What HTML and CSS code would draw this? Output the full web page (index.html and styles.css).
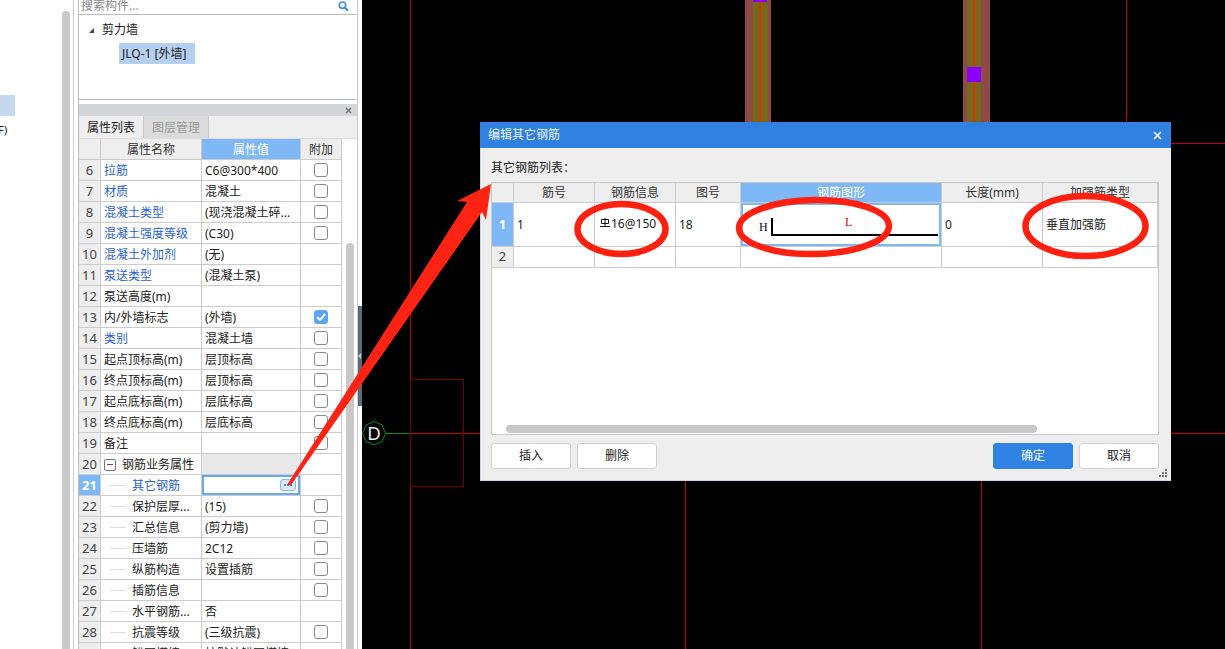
FILE: index.html
```html
<!DOCTYPE html>
<html lang="zh">
<head>
<meta charset="utf-8">
<title>编辑其它钢筋</title>
<link rel="stylesheet" href="styles.css">
</head>
<body>
<div class="app">
  <aside class="nav">
    <div class="nav-item"></div>
    <div class="nav-label">F)</div>
  </aside>
  <div class="gutter"><div class="gutter-thumb"></div></div>
  <section class="panel">
    <div class="search">
      <span class="search-text">搜索构件...</span>
      <svg class="search-icon" width="11" height="11" viewBox="0 0 11 11"><circle cx="4.5" cy="4.2" r="3.2" fill="none" stroke="#3d8fd8" stroke-width="1.6"/><path d="M7 6.8l3 3" stroke="#3d8fd8" stroke-width="2"/></svg>
    </div>
    <div class="tree">
      <div class="tree-root"><span class="tree-arrow"></span>剪力墙</div>
      <div class="tree-leaf">JLQ-1 [外墙]</div>
    </div>
    <div class="panel-bar"><svg width="7" height="7" viewBox="0 0 7 7"><path d="M1 1l5 5M6 1l-5 5" stroke="#777" stroke-width="1.5"/></svg></div>
    <div class="tabs">
      <div class="tab tab-on">属性列表</div>
      <div class="tab tab-off">图层管理</div>
    </div>
    <div class="props">
      <table class="ptable">
        <colgroup><col class="c-num"><col class="c-name"><col class="c-val"><col class="c-add"></colgroup>
        <thead><tr><th></th><th>属性名称</th><th class="th-on">属性值</th><th>附加</th></tr></thead>
        <tbody>
          <tr><td class="num">6</td><td class="link">拉筋</td><td>C6@300*400</td><td class="add"><i class="cb"></i></td></tr>
          <tr><td class="num">7</td><td class="link">材质</td><td>混凝土</td><td class="add"><i class="cb"></i></td></tr>
          <tr><td class="num">8</td><td class="link">混凝土类型</td><td>(现浇混凝土碎...</td><td class="add"><i class="cb"></i></td></tr>
          <tr><td class="num">9</td><td class="link">混凝土强度等级</td><td>(C30)</td><td class="add"><i class="cb"></i></td></tr>
          <tr><td class="num">10</td><td class="link">混凝土外加剂</td><td>(无)</td><td class="add"></td></tr>
          <tr><td class="num">11</td><td class="link">泵送类型</td><td>(混凝土泵)</td><td class="add"></td></tr>
          <tr><td class="num">12</td><td>泵送高度(m)</td><td></td><td class="add"></td></tr>
          <tr><td class="num">13</td><td>内/外墙标志</td><td>(外墙)</td><td class="add"><i class="cb cb-on"><svg width="10" height="8" viewBox="0 0 10 8"><path d="M1 4l3 3 5-6" fill="none" stroke="#fff" stroke-width="2"/></svg></i></td></tr>
          <tr><td class="num">14</td><td class="link">类别</td><td>混凝土墙</td><td class="add"><i class="cb"></i></td></tr>
          <tr><td class="num">15</td><td>起点顶标高(m)</td><td>层顶标高</td><td class="add"><i class="cb"></i></td></tr>
          <tr><td class="num">16</td><td>终点顶标高(m)</td><td>层顶标高</td><td class="add"><i class="cb"></i></td></tr>
          <tr><td class="num">17</td><td>起点底标高(m)</td><td>层底标高</td><td class="add"><i class="cb"></i></td></tr>
          <tr><td class="num">18</td><td>终点底标高(m)</td><td>层底标高</td><td class="add"><i class="cb"></i></td></tr>
          <tr><td class="num">19</td><td>备注</td><td></td><td class="add"><i class="cb"></i></td></tr>
          <tr><td class="num">20</td><td class="group"><span class="minus"></span>钢筋业务属性</td><td class="group-val"></td><td class="add"></td></tr>
          <tr><td class="num num-on">21</td><td class="sub link"><span class="dash"></span>其它钢筋</td><td class="val-on"><span class="more"><svg width="8" height="2" viewBox="0 0 8 2"><path d="M0 0h2v2H0zM3 0h2v2H3zM6 0h2v2H6z" fill="#5a8fd0"/></svg></span></td><td class="add"></td></tr>
          <tr><td class="num">22</td><td class="sub"><span class="dash"></span>保护层厚...</td><td>(15)</td><td class="add"><i class="cb"></i></td></tr>
          <tr><td class="num">23</td><td class="sub"><span class="dash"></span>汇总信息</td><td>(剪力墙)</td><td class="add"><i class="cb"></i></td></tr>
          <tr><td class="num">24</td><td class="sub"><span class="dash"></span>压墙筋</td><td>2C12</td><td class="add"><i class="cb"></i></td></tr>
          <tr><td class="num">25</td><td class="sub"><span class="dash"></span>纵筋构造</td><td>设置插筋</td><td class="add"><i class="cb"></i></td></tr>
          <tr><td class="num">26</td><td class="sub"><span class="dash"></span>插筋信息</td><td></td><td class="add"><i class="cb"></i></td></tr>
          <tr><td class="num">27</td><td class="sub"><span class="dash"></span>水平钢筋...</td><td>否</td><td class="add"></td></tr>
          <tr><td class="num">28</td><td class="sub"><span class="dash"></span>抗震等级</td><td>(三级抗震)</td><td class="add"><i class="cb"></i></td></tr>
          <tr><td class="num">29</td><td class="sub"><span class="dash"></span>锚固搭接</td><td>按默认锚固搭接</td><td class="add"></td></tr>
        </tbody>
      </table>
      <div class="props-scroll"><div class="props-thumb"></div></div>
    </div>
  </section>
  <div class="splitter"><div class="splitter-grip"><span class="splitter-arrow"></span></div></div>
  <main class="canvas">
    <svg class="drawing" width="863" height="649" viewBox="362 0 863 649">
      <path d="M410.5 0V649M1126.5 0V144M685.5 470V649M981.5 470V649" stroke="#c00000" stroke-width="1" fill="none"/>
      <path d="M1126 143.500H1225M410 433.500H500M1160 433.500H1225" stroke="#c00000" fill="none"/>
      <rect x="410.500" y="379.500" width="53" height="107" fill="none" stroke="#740000"/>
      <path d="M385 433.500H410" stroke="#0c8c0c" fill="none"/>
      <path d="M374 421.500l8 3.500 3.500 8.500-3.500 8-8 3.500-8-3.500-3.500-8 3.500-8.500z" fill="none" stroke="#0c8c0c"/>
      <text class="axis-label" x="374" y="439.500">D</text>
      <rect x="745" y="0" width="26" height="125" fill="#8f4a46"/>
      <rect x="753" y="0" width="15" height="125" fill="#75691c"/>
      <rect x="759.500" y="0" width="1.500" height="125" fill="#ff2000"/>
      <rect x="753" y="0" width="14" height="2" fill="#8a00ff"/>
      <rect x="963" y="0" width="27" height="125" fill="#8f4a46"/>
      <rect x="967" y="0" width="14" height="125" fill="#75691c"/>
      <rect x="973.500" y="0" width="1.500" height="125" fill="#ff2000"/>
      <rect x="967" y="67" width="14" height="15" fill="#8a00ff"/>
    </svg>
  </main>
</div>

<div class="dialog">
  <header class="dialog-title">
    <span>编辑其它钢筋</span>
    <svg width="9" height="9" viewBox="0 0 9 9"><path d="M1 1l7 7M8 1l-7 7" stroke="#fff" stroke-width="1.600"/></svg>
  </header>
  <div class="dialog-body">
    <div class="dialog-label">其它钢筋列表<span class="colon">：</span></div>
    <div class="grid-wrap">
      <table class="dtable">
        <colgroup><col class="d-num"><col class="d-a"><col class="d-a"><col class="d-b"><col class="d-c"><col class="d-d"><col class="d-e"></colgroup>
        <thead><tr><th></th><th>筋号</th><th>钢筋信息</th><th>图号</th><th class="th-on">钢筋图形</th><th>长度(mm)</th><th>加强筋类型</th></tr></thead>
        <tbody>
          <tr class="row-tall"><td class="num num-on">1</td><td>1</td><td class="info-cell"><svg class="rebar" width="10" height="10" viewBox="0 0 10 10"><path d="M1.500 1.500h7v4h-7zM5 0v8M0 8.500h10" fill="none" stroke="#111" stroke-width="1"/></svg>16@150</td><td>18</td>
            <td class="shape-cell">
              <div class="shape">
                <span class="shape-h">H</span>
                <span class="shape-l">L</span>
                <span class="shape-line"></span>
              </div>
            </td><td>0</td><td>垂直加强筋</td></tr>
          <tr class="row-short"><td class="num">2</td><td></td><td></td><td></td><td></td><td></td><td></td></tr>
        </tbody>
      </table>
      <div class="grid-scroll"></div>
    </div>
    <div class="dialog-foot">
      <button class="btn">插入</button>
      <button class="btn">删除</button>
      <span class="spacer"></span>
      <button class="btn btn-primary">确定</button>
      <button class="btn">取消</button>
    </div>
  </div>
  <svg class="grip" width="9" height="9" viewBox="0 0 9 9"><path d="M6 0h2v2H6zM3 3h2v2H3zM6 3h2v2H6zM0 6h2v2H0zM3 6h2v2H3zM6 6h2v2H6z" fill="#777"/></svg>
</div>

<svg class="annotations" width="1225" height="649" viewBox="0 0 1225 649">
  <polygon points="287,485 467,202 457,201 491,184 486,220 482,212 291,485" fill="#ff2314"/>
  <g fill="none" stroke="#ff2010" stroke-width="6.500">
    <ellipse cx="621.500" cy="229" rx="44" ry="25"/>
    <ellipse cx="814" cy="227" rx="75" ry="27" transform="rotate(-1 814 227)"/>
    <ellipse cx="1085.500" cy="226" rx="60" ry="30"/>
  </g>
</svg>
</body>
</html>
```

FILE: styles.css
```css
* { box-sizing: border-box; }
html, body { margin: 0; height: 100%; overflow: hidden; background: #fff; }
body { font: 12px/1.2 "Noto Sans", "Noto Sans CJK SC", sans-serif; color: #222; position: relative; }

.app { display: flex; height: 649px; }

.nav { width: 62px; padding-top: 95px; flex: none; }
.nav-item { width: 15px; height: 21px; background: #c6d9f1; }
.nav-label { margin-top: 7px; font-size: 11px; line-height: 14px; margin-left: -2px; }

.gutter { width: 16px; flex: none; padding-top: 11px; border-right: 0; position: relative; background: linear-gradient(#ccc, #ccc) 11px 0 / 1px 100% no-repeat; }
.gutter-thumb { width: 8px; height: 640px; background: #c8c8c8; border-radius: 4px 4px 0 0; }

.panel { width: 280px; flex: none; display: flex; flex-direction: column; border-left: 1px solid #bbb; border-right: 1px solid #ccc; overflow: hidden; }

.search { height: 15px; flex: none; display: flex; justify-content: space-between; align-items: center; padding: 0 8px 2px 2px; border-bottom: 1px solid #bbb; overflow: hidden; }
.search-text { color: #888; font-size: 12px; line-height: 13px; margin-top: -2px; }
.search-icon { flex: none; }

.tree { height: 85px; flex: none; border-bottom: 1px solid #bbb; padding-top: 5px; }
.tree-root { display: flex; align-items: center; height: 20px; padding-left: 10px; font-size: 12px; color: #222; }
.tree-arrow { width: 0; height: 0; border-style: solid; border-width: 0 0 5px 5px; border-color: transparent transparent #444 transparent; margin-right: 8px; }
.tree-leaf { margin: 3px 0 0 40px; width: 76px; height: 21px; line-height: 21px; background: #b5cff0; padding-left: 3px; white-space: nowrap; color: #222; }

.panel-bar { height: 12px; margin-top: 4px; flex: none; background: #d4d5d9; display: flex; justify-content: flex-end; align-items: center; padding-right: 5px; }
.tabs { height: 23px; flex: none; display: flex; background: #eee; border-bottom: 1px solid #ddd; }
.tab { width: 64px; text-align: center; line-height: 24px; }
.tab-on { color: #222; }
.tab-off { color: #999; background: #dcdcdc; border-left: 1px solid #ccc; border-right: 1px solid #ccc; width: 66px; }

.props { flex: 1; display: flex; min-height: 0; }
.ptable, .dtable { border-collapse: separate; border-spacing: 0; table-layout: fixed; flex: none; }
.ptable { width: 263px; align-self: flex-start; }
.c-num { width: 22px; } .c-name { width: 101px; } .c-val { width: 99px; } .c-add { width: 41px; }

th, td { padding: 0; border-right: 1px solid #ccc; border-bottom: 1px solid #ccc; font-weight: 400; white-space: nowrap; overflow: hidden; }
th { background: #eee; color: #333; text-align: center; }
.ptable th, .ptable td { height: 21px; line-height: 19px; }
.ptable td { padding-left: 3px; }
.th-on { background: #7eb8f7; color: #fff; }
.ptable td.num, .dtable td.num { padding: 0; background: #eee; color: #444; text-align: center; font-size: 13px; }
.ptable td.num-on, .dtable td.num-on { background: #7eb8f7; color: #fff; font-weight: 700; }
.link { color: #2a5fe0; }
.ptable td.add { padding: 0; text-align: center; }
.cb { display: inline-flex; width: 14px; height: 14px; border: 1px solid #8a8a8a; border-radius: 3px; background: #fff; vertical-align: middle; align-items: center; justify-content: center; margin-top: -2px; }
.cb-on { background: #5ba4f5; border-color: #5ba4f5; }

.ptable td.group { padding-left: 3px; }
.minus { display: inline-block; width: 12px; height: 12px; border: 1px solid #777; border-radius: 2px; margin-right: 6px; vertical-align: -2px; background: linear-gradient(#555, #555) center / 6px 1px no-repeat; }
.group-val { background: #e8e8e8; }
.ptable td.sub { padding-left: 9px; }
.dash { display: inline-block; width: 16px; height: 1px; background: #ddd; margin-right: 6px; vertical-align: 4px; }
.ptable td.val-on { box-shadow: inset 0 0 0 2px #6aabec; text-align: right; padding-right: 4px; line-height: 0; }
.more { display: inline-flex; width: 16px; height: 12px; border: 1px solid #7eb8f7; border-radius: 3px; background: #d9e9fb; align-items: center; justify-content: center; }

.props-scroll { padding: 104px 0 0 4px; }
.props-thumb { width: 8px; height: 420px; background: #c8c8c8; border-radius: 4px 4px 0 0; }

.splitter { width: 4px; flex: none; padding-top: 306px; }
.splitter-grip { height: 100px; background: #5f6a72; display: flex; align-items: center; }
.splitter-arrow { width: 0; height: 0; border-style: solid; border-width: 3px 3px 3px 0; border-color: transparent #c8ccd0 transparent transparent; }

.canvas { flex: 1; background: #000; position: relative; overflow: hidden; }
.drawing { display: block; }
.axis-label { font: 18px "Liberation Sans", sans-serif; fill: #eee; text-anchor: middle; }

.dialog { position: absolute; left: 480px; top: 122px; width: 691px; height: 359px; background: #eee; display: flex; flex-direction: column; box-shadow: inset 0 -1px #cfd6e6, inset 1px 0 #cfd6e6; }
.dialog-title { height: 26px; flex: none; background: #2f80e0; color: #e8f1fc; display: flex; align-items: center; justify-content: space-between; padding: 0 9px 0 8px; }
.dialog-body { padding: 0 12px 0 11px; flex: 1; display: flex; flex-direction: column; }
.dialog-label { height: 34px; line-height: 38px; color: #222; }
.colon { font-family: "Noto Sans CJK TC", sans-serif; }
.grid-wrap { height: 253px; flex: none; border: 1px solid #c8c8c8; background: #fff; position: relative; }
.dtable { width: 666px; }
.d-num { width: 22px; } .d-a { width: 81px; } .d-b { width: 65px; } .d-c { width: 201px; } .d-d { width: 101px; } .d-e { width: 115px; }
.dtable th { height: 20px; line-height: 19px; }
.dtable td { padding: 2px 0 0 3px; color: #222; }
.row-tall td { height: 44px; }
.row-short td { height: 21px; }
.dtable td.info-cell { padding: 0 0 1px 5px; }
.rebar { vertical-align: 0; margin-right: 1px; }
.dtable td.shape-cell { padding: 0; box-shadow: inset 0 0 0 2px #7eb8f7; }
.shape { position: relative; height: 43px; }
.shape-h, .shape-l { position: absolute; font: 12px/12px "Liberation Serif", serif; }
.shape-h { left: 18px; top: 18px; color: #111; }
.shape-l { left: 104px; top: 13px; color: #e00000; }
.shape-line { position: absolute; left: 30px; top: 15px; width: 167px; height: 18px; border-left: 2px solid #000; border-bottom: 2px solid #000; }
.grid-scroll { position: absolute; left: 14px; top: 242px; width: 531px; height: 8px; background: #c8c8c8; border-radius: 4px; }

.dialog-foot { display: flex; gap: 6px; margin-top: 8px; }
.spacer { flex: 1; }
.btn { width: 80px; height: 26px; padding: 0; background: #fff; border: 1px solid #d2d2d2; border-radius: 3px; font: inherit; color: #222; }
.btn-primary { background: #3083e3; border-color: #3083e3; color: #f0f6fd; }
.grip { position: absolute; right: 3px; bottom: 3px; }

.annotations { position: absolute; left: 0; top: 0; pointer-events: none; }
```
